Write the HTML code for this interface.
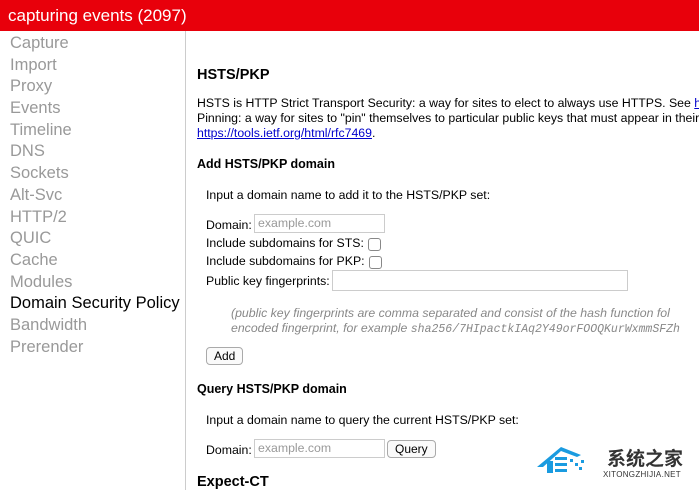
<!DOCTYPE html>
<html><head><meta charset="utf-8"><style>
body{margin:0;width:699px;height:490px;overflow:hidden;background:#fff;font-family:"Liberation Sans",Arial,sans-serif;position:relative}
.top{position:absolute;left:0;top:0;width:699px;height:31px;background:#e8000b;color:#fff;font-size:17px;line-height:31px;padding-left:8px;box-sizing:border-box}
.side{position:absolute;left:0;top:33px;width:185px;height:457px}
.bd{position:absolute;left:185px;top:31px;width:1px;height:459px;background:#ccc}
.side div{font-size:16.5px;color:#999;height:21.7px;line-height:21.7px;padding-left:10px}
.side div.a{color:#000}
.a2{color:#00c;text-decoration:underline}
h2{font-size:14.5px;margin:0;position:absolute;font-weight:bold}
h3{font-size:12.5px;margin:0;position:absolute;font-weight:bold}
.t{position:absolute;white-space:nowrap;font-size:12.3px}
.in{position:absolute;border:1px solid #ccc;height:19px;box-sizing:border-box;color:#999;font-size:12.3px;padding-left:3px;line-height:17px}
.cb{position:absolute;width:11px;height:11px;border:1px solid #888;border-radius:3px}
.btn{position:absolute;border:1px solid #aaa;border-radius:4px;height:18px;font-size:12px;line-height:16px;padding:0 7px;box-sizing:border-box;background:#fafafa}
</style></head><body>
<div class="top">capturing events (2097)</div>
<div class="bd"></div>
<div class="side">
<div>Capture</div><div>Import</div><div>Proxy</div><div>Events</div><div>Timeline</div><div>DNS</div><div>Sockets</div><div>Alt-Svc</div><div>HTTP/2</div><div>QUIC</div><div>Cache</div><div>Modules</div><div class="a">Domain Security Policy</div><div>Bandwidth</div><div>Prerender</div>
</div>
<h2 style="left:197px;top:67px">HSTS/PKP</h2>
<div class="t" style="left:197px;top:96px;line-height:15px">HSTS is HTTP Strict Transport Security: a way for sites to elect to always use HTTPS. See <span class="a2">http</span><br>Pinning: a way for sites to "pin" themselves to particular public keys that must appear in their<br><span class="a2">https://tools.ietf.org/html/rfc7469</span>.</div>
<h3 style="left:197px;top:157px">Add HSTS/PKP domain</h3>
<div class="t" style="left:206px;top:188px">Input a domain name to add it to the HSTS/PKP set:</div>
<div class="t" style="left:206px;top:218px">Domain:</div>
<div class="in" style="left:254px;top:214px;width:131px">example.com</div>
<div class="t" style="left:206px;top:236px">Include subdomains for STS:</div>
<div class="cb" style="left:368px;top:238px"></div>
<div class="t" style="left:206px;top:254px">Include subdomains for PKP:</div>
<div class="cb" style="left:369px;top:256px"></div>
<div class="t" style="left:206px;top:274px">Public key fingerprints:</div>
<div class="in" style="left:332px;top:270px;width:296px;height:21px"></div>
<div class="t" style="left:231px;top:306px;color:#888;font-style:italic;line-height:15px">(public key fingerprints are comma separated and consist of the hash function fol<br>encoded fingerprint, for example <span style="font-family:'Liberation Mono',monospace;font-size:11.5px">sha256/7HIpactkIAq2Y49orFOOQKurWxmmSFZh</span></div>
<div class="btn" style="left:206px;top:347px">Add</div>
<h3 style="left:197px;top:382px">Query HSTS/PKP domain</h3>
<div class="t" style="left:206px;top:413px">Input a domain name to query the current HSTS/PKP set:</div>
<div class="t" style="left:206px;top:443px">Domain:</div>
<div class="in" style="left:254px;top:439px;width:131px">example.com</div>
<div class="btn" style="left:387px;top:440px">Query</div>
<h2 style="left:197px;top:474px">Expect-CT</h2>
<svg style="position:absolute;left:537px;top:443px" width="62" height="34" viewBox="0 0 62 34">
<path d="M0 24 L24 4 L44 12 L40 14 L24 8 L6 24 Z" fill="#1a9be0"/>
<rect x="10" y="18" width="6" height="12" fill="#1a9be0"/>
<rect x="18" y="14" width="12" height="3" fill="#1a9be0"/><rect x="18" y="20" width="12" height="3" fill="#1a9be0"/><rect x="18" y="26" width="12" height="3" fill="#1a9be0"/>
<rect x="33" y="16" width="3" height="3" fill="#1a9be0"/><rect x="38" y="20" width="3" height="3" fill="#1a9be0"/><rect x="44" y="17" width="3" height="3" fill="#1a9be0"/><rect x="42" y="24" width="3" height="3" fill="#1a9be0"/>
</svg>
<div class="t" style="left:607px;top:444px;font-size:19px;font-family:'Noto Sans CJK SC',sans-serif;color:#333;font-weight:bold">系统之家</div>
<div class="t" style="left:603px;top:470px;font-size:8px;color:#333;letter-spacing:0.3px">XITONGZHIJIA.NET</div>
</body></html>
